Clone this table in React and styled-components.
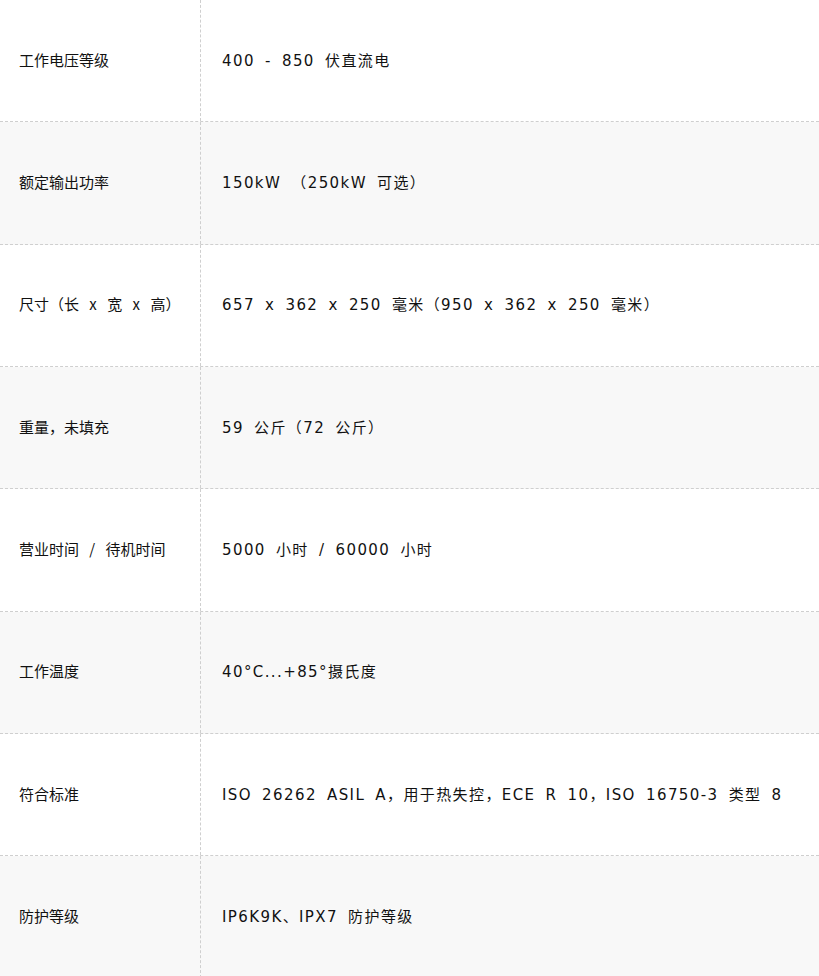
import React from "react";
import styled, { createGlobalStyle } from "styled-components";

const Global = createGlobalStyle`
  html, body { margin: 0; padding: 0; background: #fff; }
  body { font-family: "Noto Sans CJK SC", "Noto Sans", sans-serif; color: #111; }
`;

const Table = styled.div`
  width: 819px;
  display: flex;
  flex-direction: column;
`;

const Row = styled.div`
  display: grid;
  grid-template-columns: 201px 1fr;
  height: 122.33px;
  box-sizing: border-box;
  border-bottom: 1px dashed #cfcfcf;
  background: ${(p) => (p.$alt ? "#f8f8f8" : "#ffffff")};
`;

const Label = styled.div`
  display: flex;
  align-items: center;
  padding: 0 0 3px 19px;
  border-right: 1px dashed #cfcfcf;
  font-size: 15px;
  white-space: pre;
  word-spacing: 7px;
`;

const Value = styled.div`
  display: flex;
  align-items: center;
  padding: 0 0 3px 21px;
  font-size: 15px;
  white-space: pre;
  font-family: "DejaVu Sans", "Noto Sans CJK SC", sans-serif;
  letter-spacing: 1.4px;
  word-spacing: 4px;
`;

const rows = [
  ["工作电压等级", "400 - 850 伏直流电"],
  ["额定输出功率", "150kW （250kW 可选）"],
  ["尺寸（长 x 宽 x 高）", "657 x 362 x 250 毫米（950 x 362 x 250 毫米）"],
  ["重量，未填充", "59 公斤（72 公斤）"],
  ["营业时间 / 待机时间", "5000 小时 / 60000 小时"],
  ["工作温度", "40°C...+85°摄氏度"],
  ["符合标准", "ISO 26262 ASIL A，用于热失控，ECE R 10，ISO 16750-3 类型 8"],
  ["防护等级", "IP6K9K、IPX7 防护等级"],
];

export default function App() {
  return (
    <>
      <Global />
      <Table>
        {rows.map(([l, v], i) => (
          <Row key={i} $alt={i % 2 === 1}>
            <Label>{l}</Label>
            <Value>{v}</Value>
          </Row>
        ))}
      </Table>
    </>
  );
}
